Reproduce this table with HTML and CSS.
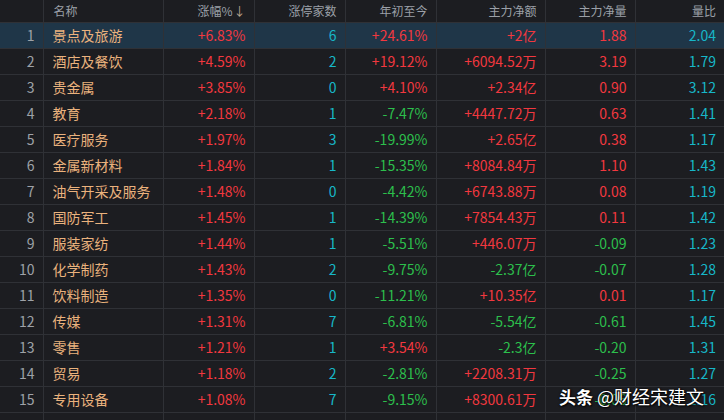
FILE: index.html
```html
<!DOCTYPE html>
<html lang="zh">
<head>
<meta charset="utf-8">
<link rel="stylesheet" href="styles.css">
</head>
<body>
<div class="board">
<table class="grid">
<colgroup>
<col class="c-idx"><col class="c-name"><col class="c-pct"><col class="c-lim"><col class="c-ytd"><col class="c-amt"><col class="c-vol"><col class="c-ratio">
</colgroup>
<thead>
<tr><th></th><th class="l">名称</th><th>涨幅%<span class="arr">↓</span></th><th>涨停家数</th><th>年初至今</th><th>主力净额</th><th>主力净量</th><th>量比</th></tr>
</thead>
<tbody>
<tr class="sel"><td class="idx">1</td><td class="name">景点及旅游</td><td class="up">+6.83%</td><td class="cy">6</td><td class="up">+24.61%</td><td class="up">+2亿</td><td class="up">1.88</td><td class="cy">2.04</td></tr>
<tr><td class="idx">2</td><td class="name">酒店及餐饮</td><td class="up">+4.59%</td><td class="cy">2</td><td class="up">+19.12%</td><td class="up">+6094.52万</td><td class="up">3.19</td><td class="cy">1.79</td></tr>
<tr><td class="idx">3</td><td class="name">贵金属</td><td class="up">+3.85%</td><td class="cy">0</td><td class="up">+4.10%</td><td class="up">+2.34亿</td><td class="up">0.90</td><td class="cy">3.12</td></tr>
<tr><td class="idx">4</td><td class="name">教育</td><td class="up">+2.18%</td><td class="cy">1</td><td class="dn">-7.47%</td><td class="up">+4447.72万</td><td class="up">0.63</td><td class="cy">1.41</td></tr>
<tr><td class="idx">5</td><td class="name">医疗服务</td><td class="up">+1.97%</td><td class="cy">3</td><td class="dn">-19.99%</td><td class="up">+2.65亿</td><td class="up">0.38</td><td class="cy">1.17</td></tr>
<tr><td class="idx">6</td><td class="name">金属新材料</td><td class="up">+1.84%</td><td class="cy">1</td><td class="dn">-15.35%</td><td class="up">+8084.84万</td><td class="up">1.10</td><td class="cy">1.43</td></tr>
<tr><td class="idx">7</td><td class="name">油气开采及服务</td><td class="up">+1.48%</td><td class="cy">0</td><td class="dn">-4.42%</td><td class="up">+6743.88万</td><td class="up">0.08</td><td class="cy">1.19</td></tr>
<tr><td class="idx">8</td><td class="name">国防军工</td><td class="up">+1.45%</td><td class="cy">1</td><td class="dn">-14.39%</td><td class="up">+7854.43万</td><td class="up">0.11</td><td class="cy">1.42</td></tr>
<tr><td class="idx">9</td><td class="name">服装家纺</td><td class="up">+1.44%</td><td class="cy">1</td><td class="dn">-5.51%</td><td class="up">+446.07万</td><td class="dn">-0.09</td><td class="cy">1.23</td></tr>
<tr><td class="idx">10</td><td class="name">化学制药</td><td class="up">+1.43%</td><td class="cy">2</td><td class="dn">-9.75%</td><td class="dn">-2.37亿</td><td class="dn">-0.07</td><td class="cy">1.28</td></tr>
<tr><td class="idx">11</td><td class="name">饮料制造</td><td class="up">+1.35%</td><td class="cy">0</td><td class="dn">-11.21%</td><td class="up">+10.35亿</td><td class="up">0.01</td><td class="cy">1.17</td></tr>
<tr><td class="idx">12</td><td class="name">传媒</td><td class="up">+1.31%</td><td class="cy">7</td><td class="dn">-6.81%</td><td class="dn">-5.54亿</td><td class="dn">-0.61</td><td class="cy">1.45</td></tr>
<tr><td class="idx">13</td><td class="name">零售</td><td class="up">+1.21%</td><td class="cy">1</td><td class="up">+3.54%</td><td class="dn">-2.3亿</td><td class="dn">-0.20</td><td class="cy">1.31</td></tr>
<tr><td class="idx">14</td><td class="name">贸易</td><td class="up">+1.18%</td><td class="cy">2</td><td class="dn">-2.81%</td><td class="up">+2208.31万</td><td class="dn">-0.25</td><td class="cy">1.27</td></tr>
<tr><td class="idx">15</td><td class="name">专用设备</td><td class="up">+1.08%</td><td class="cy">7</td><td class="dn">-9.15%</td><td class="up">+8300.61万</td><td class="dn">-0.06</td><td class="cy">1.16</td></tr>
<tr class="blank"><td></td><td></td><td></td><td></td><td></td><td></td><td></td><td></td></tr>
</tbody>
</table>
<div class="mark"><b>头条</b> @财经宋建文</div>
</div>
</body>
</html>
```
FILE: styles.css
```css
html, body {
  margin: 0;
  padding: 0;
  background: #1c1d21;
  overflow: hidden;
}
.board {
  position: relative;
  width: 724px;
  height: 420px;
  overflow: hidden;
  font-family: "Noto Sans CJK SC", "Noto Sans", sans-serif;
}
.grid {
  border-collapse: collapse;
  table-layout: fixed;
  width: 724px;
}
.c-idx { width: 43px; }
.c-name { width: 120px; }
.c-pct { width: 91px; }
.c-lim { width: 91px; }
.c-ytd { width: 91px; }
.c-amt { width: 109px; }
.c-vol { width: 90px; }
.c-ratio { width: 89px; }
.grid th, .grid td {
  border: 1px solid #2f3136;
  border-top: none;
  padding: 0 8px 0 8px;
  text-align: right;
  white-space: nowrap;
  overflow: hidden;
}
.grid tr > :first-child { border-left: none; }
.grid tr > :last-child { border-right: none; }
.grid th {
  height: 22px;
  font-size: 12px;
  font-weight: normal;
  color: #9ba0a8;
  line-height: 22px;
}
.grid th.l { text-align: left; padding-left: 10px; }
.arr { color: #b9a58e; margin-left: 1px; }
.grid td {
  height: 25px;
  font-size: 14px;
  line-height: 25px;
}
.grid td.idx { color: #9ea2a8; padding-right: 8px; }
.grid td.name { text-align: left; color: #eab27d; padding-left: 9px; }
.up { color: #f2383f; }
.dn { color: #2cbf4c; }
.cy { color: #17b7c8; }
.sel td { background: #1f3648; }
.blank td { height: 25px; }
.mark {
  position: absolute;
  left: 559px;
  top: 383px;
  font-size: 18px;
  line-height: 26px;
  color: #ffffff;
  text-shadow: 0 0 2px #000, 1px 1px 2px #000;
  white-space: nowrap;
}
.mark b { font-weight: bold; font-size: 17px; }
```
